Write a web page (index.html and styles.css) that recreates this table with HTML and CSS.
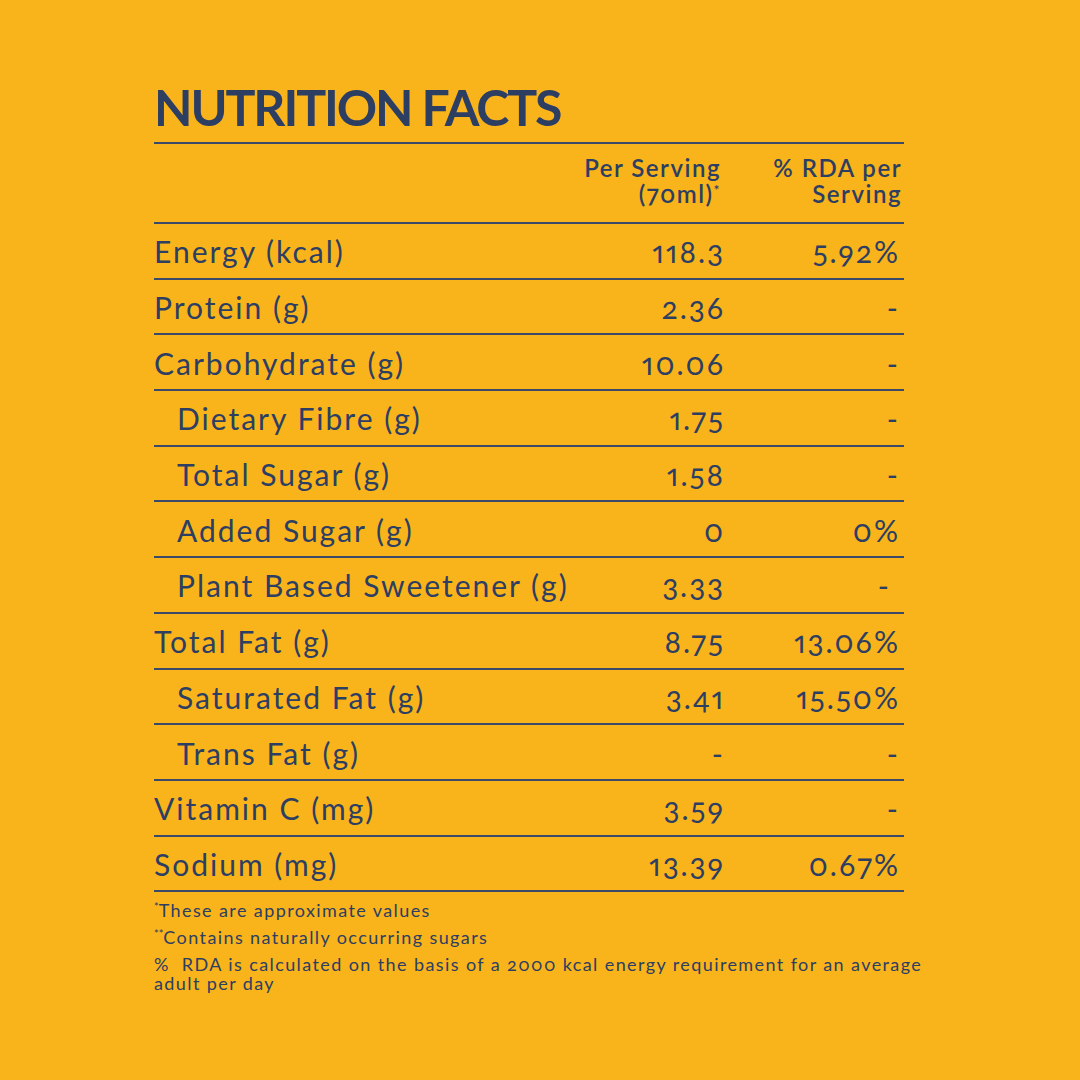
FILE: index.html
```html
<!DOCTYPE html>
<html lang="en">
<head>
<meta charset="utf-8">
<title>Nutrition Facts</title>
<link rel="stylesheet" href="styles.css">
</head>
<body>
<main class="panel">
  <h1 class="title">NUTRITION FACTS</h1>
  <div class="table">
    <div class="head">
      <span></span>
      <div class="h-col"><span class="h-line">Per Serving</span><span class="h-line">(70ml)<sup>*</sup></span></div>
      <div class="h-col"><span class="h-line">% RDA per</span><span class="h-line">Serving</span></div>
    </div>
    <div class="row"><span class="label">Energy (kcal)</span><span class="val">118.3</span><span class="val">5.92%</span></div>
    <div class="row"><span class="label">Protein (g)</span><span class="val">2.36</span><span class="val">-</span></div>
    <div class="row"><span class="label">Carbohydrate (g)</span><span class="val">10.06</span><span class="val">-</span></div>
    <div class="row"><span class="label sub">Dietary Fibre (g)</span><span class="val">1.75</span><span class="val">-</span></div>
    <div class="row"><span class="label sub">Total Sugar (g)</span><span class="val">1.58</span><span class="val">-</span></div>
    <div class="row"><span class="label sub">Added Sugar (g)</span><span class="val">0</span><span class="val">0%</span></div>
    <div class="row"><span class="label sub">Plant Based Sweetener (g)</span><span class="val">3.33</span><span class="val shift">-</span></div>
    <div class="row"><span class="label">Total Fat (g)</span><span class="val">8.75</span><span class="val">13.06%</span></div>
    <div class="row"><span class="label sub">Saturated Fat (g)</span><span class="val">3.41</span><span class="val">15.50%</span></div>
    <div class="row"><span class="label sub">Trans Fat (g)</span><span class="val">-</span><span class="val">-</span></div>
    <div class="row"><span class="label">Vitamin C (mg)</span><span class="val">3.59</span><span class="val">-</span></div>
    <div class="row"><span class="label">Sodium (mg)</span><span class="val">13.39</span><span class="val">0.67%</span></div>
  </div>
  <div class="notes">
    <p><sup>*</sup>These are approximate values</p>
    <p><sup>**</sup>Contains naturally occurring sugars</p>
    <p>%&nbsp; RDA is calculated on the basis of a 2000 kcal energy requirement for an average adult per day</p>
  </div>
</main>
</body>
</html>
```

FILE: styles.css
```css
html, body {
  margin: 0;
  padding: 0;
}
body {
  background: #f9b31b;
  width: 1080px;
  height: 1080px;
  font-family: Lato, "Open Sans", sans-serif;
  color: #2d3e63;
  font-variant-numeric: oldstyle-nums proportional-nums;
  font-feature-settings: "onum" 1, "pnum" 1;
}
.panel {
  padding: 80px 0 0 154px;
  width: 750px;
}
.title {
  margin: 0;
  font-size: 50px;
  font-weight: 700;
  line-height: 54px;
  height: 62px;
  letter-spacing: -2.1px;
  color: #2d3e63;
}
.table {
  border-top: 2px solid #3b4a6a;
}
.head {
  display: grid;
  grid-template-columns: minmax(0, 1fr) 181px 181px;
  padding-right: 2px;
  height: 80px;
  box-sizing: border-box;
  border-bottom: 2px solid #3b4a6a;
  align-items: start;
  padding-top: 11px;
}
.h-col {
  display: flex;
  flex-direction: column;
  align-items: flex-end;
  font-size: 24px;
  font-weight: 600;
  letter-spacing: 1.5px;
}
.h-line {
  display: block;
  line-height: 26px;
  height: 26px;
}
.h-col sup {
  font-size: 14px;
  vertical-align: 8px;
  line-height: 0;
}
.row {
  display: grid;
  grid-template-columns: minmax(0, 1fr) 175px 175px;
  padding-right: 4px;
  height: 55.7px;
  box-sizing: border-box;
  border-bottom: 2px solid #3b4a6a;
  align-items: center;
  font-size: 30px;
  line-height: 34px;
  padding-top: 1px;
  letter-spacing: 2px;
}
.label {
  white-space: nowrap;
}
.label.sub {
  padding-left: 23px;
}
.val {
  text-align: right;
  white-space: nowrap;
}
.val.shift {
  padding-right: 9px;
}
.notes {
  width: 790px;
  padding-top: 9px;
  font-size: 18px;
  line-height: 19px;
  letter-spacing: 1.4px;
}
.notes p {
  margin: 0 0 8px 0;
}
.notes p:last-child {
  margin: 0;
}
.notes sup {
  font-size: 11px;
  vertical-align: 6px;
  line-height: 0;
  letter-spacing: 0;
}
```
